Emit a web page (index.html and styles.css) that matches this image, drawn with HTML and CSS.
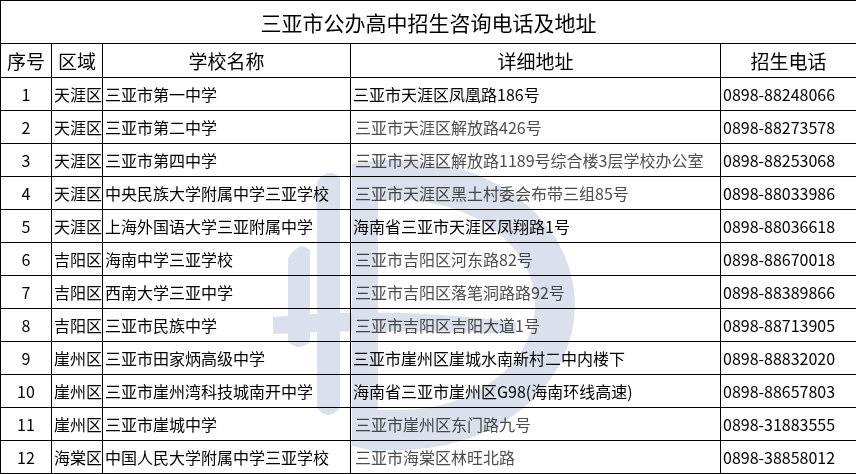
FILE: index.html
```html
<!DOCTYPE html>
<html lang="zh-CN">
<head>
<meta charset="utf-8">
<title>三亚市公办高中招生咨询电话及地址</title>
<link rel="stylesheet" href="styles.css">
</head>
<body>
<div class="sheet">
<table class="grid">
<colgroup><col class="c-no"><col class="c-area"><col class="c-name"><col class="c-addr"><col class="c-tel"></colgroup>
<tr class="title-row"><td colspan="5" class="title">三亚市公办高中招生咨询电话及地址</td></tr>
<tr class="head-row"><th>序号</th><th>区域</th><th>学校名称</th><th>详细地址</th><th>招生电话</th></tr>
<tr><td class="no">1</td><td>天涯区</td><td>三亚市第一中学</td><td>三亚市天涯区凤凰路186号</td><td>0898-88248066</td></tr>
<tr><td class="no">2</td><td>天涯区</td><td>三亚市第二中学</td><td class="grey">三亚市天涯区解放路426号</td><td>0898-88273578</td></tr>
<tr><td class="no">3</td><td>天涯区</td><td>三亚市第四中学</td><td class="grey">三亚市天涯区解放路1189号综合楼3层学校办公室</td><td>0898-88253068</td></tr>
<tr><td class="no">4</td><td>天涯区</td><td>中央民族大学附属中学三亚学校</td><td class="grey">三亚市天涯区黑土村委会布带三组85号</td><td>0898-88033986</td></tr>
<tr><td class="no">5</td><td>天涯区</td><td>上海外国语大学三亚附属中学</td><td>海南省三亚市天涯区凤翔路1号</td><td>0898-88036618</td></tr>
<tr><td class="no">6</td><td>吉阳区</td><td>海南中学三亚学校</td><td class="grey">三亚市吉阳区河东路82号</td><td>0898-88670018</td></tr>
<tr><td class="no">7</td><td>吉阳区</td><td>西南大学三亚中学</td><td class="grey">三亚市吉阳区落笔洞路路92号</td><td>0898-88389866</td></tr>
<tr><td class="no">8</td><td>吉阳区</td><td>三亚市民族中学</td><td class="grey">三亚市吉阳区吉阳大道1号</td><td>0898-88713905</td></tr>
<tr><td class="no">9</td><td>崖州区</td><td>三亚市田家炳高级中学</td><td>三亚市崖州区崖城水南新村二中内楼下</td><td>0898-88832020</td></tr>
<tr><td class="no">10</td><td>崖州区</td><td>三亚市崖州湾科技城南开中学</td><td>海南省三亚市崖州区G98(海南环线高速)</td><td>0898-88657803</td></tr>
<tr><td class="no">11</td><td>崖州区</td><td>三亚市崖城中学</td><td class="grey">三亚市崖州区东门路九号</td><td>0898-31883555</td></tr>
<tr><td class="no">12</td><td>海棠区</td><td>中国人民大学附属中学三亚学校</td><td class="grey">三亚市海棠区林旺北路</td><td>0898-38858012</td></tr>
</table>
<svg class="watermark" width="320" height="320" viewBox="0 0 320 320" aria-hidden="true">
  <g fill="#dbe1ec" stroke="none">
    <path d="M18 112 Q29 94 40 104 L40 196 Q29 206 18 196 Z"/>
    <path d="M47 36 Q58 20 70 32 L70 262 Q58 276 47 262 Z"/>
    <path d="M82 18 L108 14 L108 306 L82 300 Z"/>
    <path d="M3 171 Q120 160 246 176 L246 188 Q120 182 3 188 Z"/>
  </g>
  <path d="M108 34 L130 34 A 155 125 0 0 1 130 284 L108 284" fill="none" stroke="#dbe1ec" stroke-width="40"/>
</svg>
</div>
</body>
</html>
```
FILE: styles.css
```css
html, body {
  margin: 0;
  padding: 0;
  background: #fff;
}
.sheet {
  position: relative;
  width: 856px;
  height: 474px;
  overflow: hidden;
}
.grid {
  border-collapse: collapse;
  table-layout: fixed;
  width: 856px;
  font-family: "Noto Sans CJK SC", "Microsoft YaHei", sans-serif;
  color: #000;
}
.c-no { width: 51px; }
.c-area { width: 51px; }
.c-name { width: 248px; }
.c-addr { width: 370px; }
.c-tel { width: 136px; }
.grid td, .grid th {
  border: 1px solid #000;
  padding: 0 0 0 2px;
  font-size: 16px;
  line-height: 20px;
  font-weight: normal;
  text-align: left;
  white-space: nowrap;
  overflow: hidden;
  height: 32px;
  box-sizing: border-box;
}
.grid tr { height: 33px; }
.grid .title-row { height: 43px; }
.grid .title-row td {
  height: 43px;
  font-size: 21px;
  text-align: center;
  padding: 0;
}
.grid .head-row { height: 34px; }
.grid .head-row th {
  height: 34px;
  font-size: 19px;
  text-align: center;
  padding: 0;
}
.grid td.no {
  text-align: center;
  padding: 0;
}
.grid td.grey {
  color: #4d4d4d;
  padding-left: 4px;
}
.watermark {
  position: absolute;
  left: 270px;
  top: 146px;
  mix-blend-mode: multiply;
  pointer-events: none;
}
```
